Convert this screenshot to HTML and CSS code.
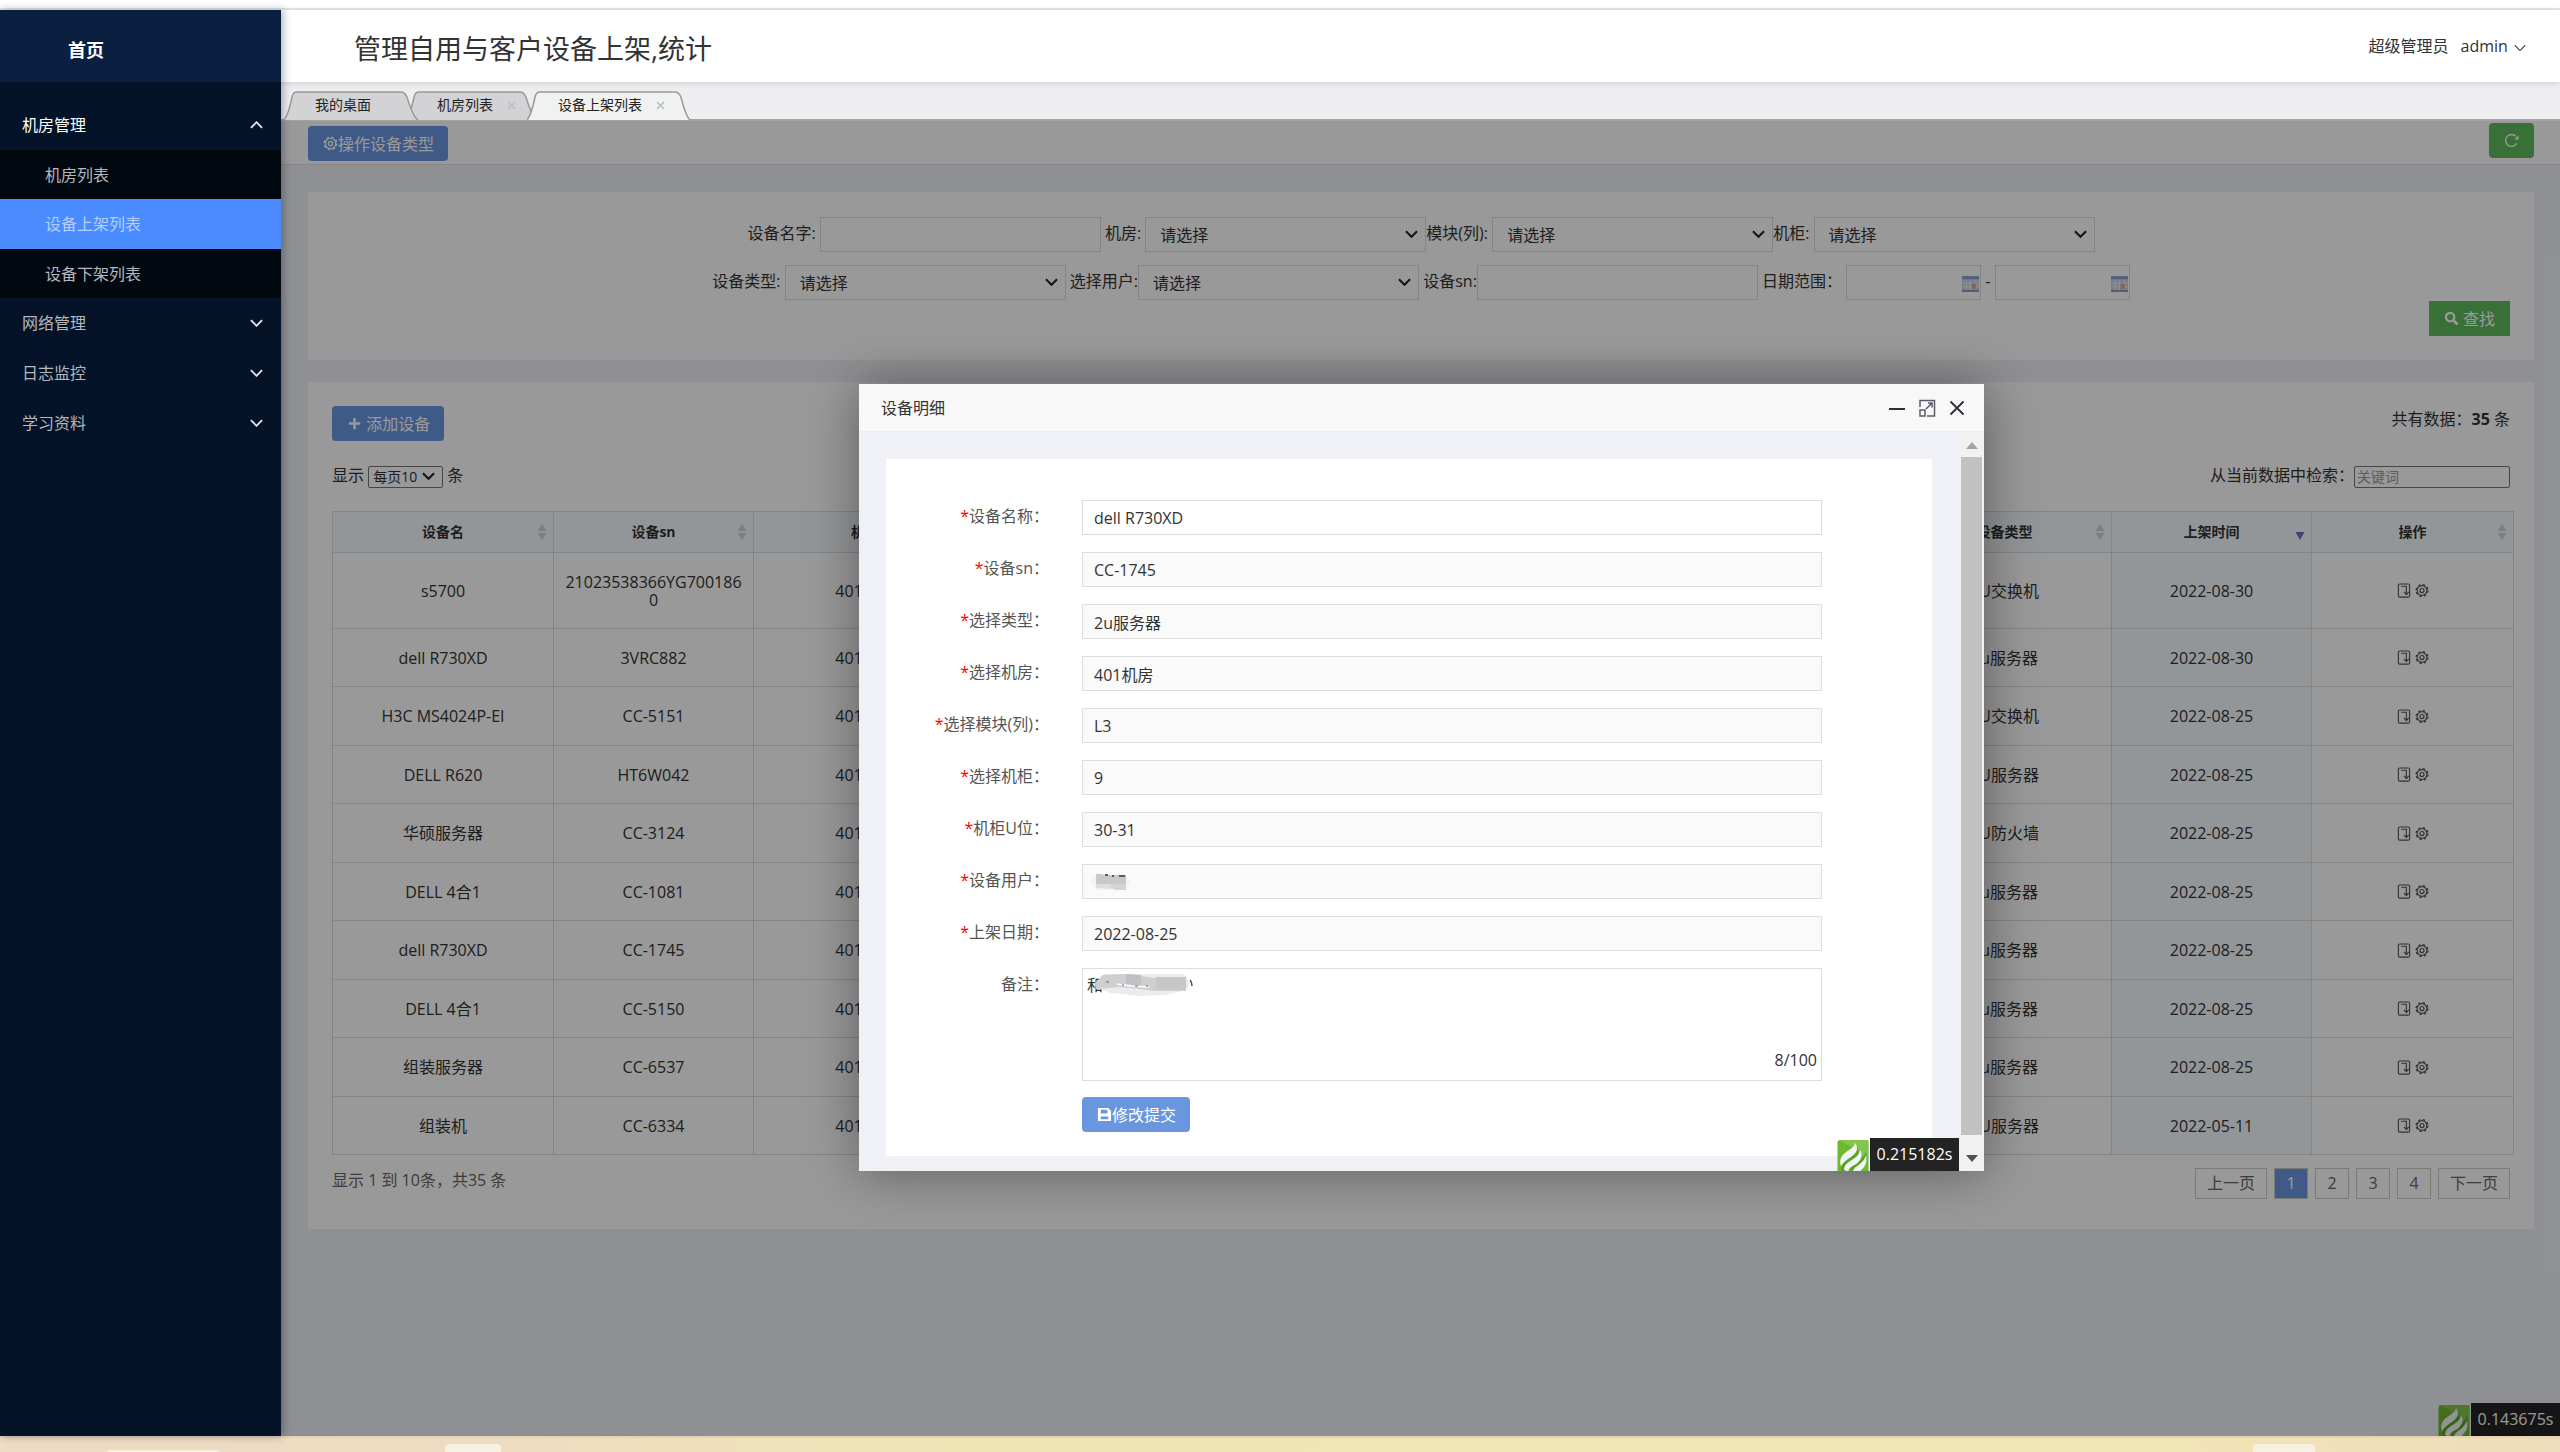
FILE: index.html
```html
<!DOCTYPE html>
<html lang="zh-CN">
<head>
<meta charset="utf-8">
<title>设备上架列表</title>
<link rel="stylesheet" href="styles.css">
</head>
<body>
<svg class="sprite" aria-hidden="true">
  <symbol id="chev" viewBox="0 0 14 8"><path d="M1 1l6 6 6-6" fill="none" stroke="currentColor" stroke-width="2"/></symbol>
  <symbol id="chev-up" viewBox="0 0 14 8"><path d="M1 7l6-6 6 6" fill="none" stroke="currentColor" stroke-width="2"/></symbol>
  <symbol id="gear" viewBox="0 0 16 16"><g fill="none" stroke="currentColor"><circle cx="8" cy="8" r="5.6" stroke-width="1.3"/><circle cx="8" cy="8" r="6.8" stroke-width="1.4" stroke-dasharray="2.8 2.54"/><circle cx="8" cy="8" r="2.3" stroke-width="1.4"/></g></symbol>
  <symbol id="down" viewBox="0 0 14 16"><g fill="none" stroke="currentColor" stroke-width="1.2"><rect x="1" y="1" width="12" height="14" rx="1.5"/><path d="M4 3.500h5.500v8M7 9.500l2.500 3 2.500-3"/></g></symbol>
  <symbol id="sort" viewBox="0 0 10 16"><path d="M5 0l4.500 7h-9zM5 16l4.500-7h-9z" fill="currentColor"/></symbol>
  <symbol id="logo" viewBox="0 0 34 34"><rect width="34" height="38" rx="3" fill="#6db82f"/><path d="M2 0h32v22L17 9z" fill="#8fcb5c" opacity=".7"/><g fill="#4f9420" opacity=".6" transform="translate(2 2)"><path d="M2 32c-1-9 4-13 10-17 5-3 7-6 7-11 4 6 2 11-3 15-5 4-9 6-8 14z"/><path d="M12 32c0-6 3-8 8-11 5-3 8-6 9-11 3 7 0 12-5 16-3 2-5 3-6 7z"/></g><g fill="#f2f5f7"><path d="M4 29c-3-8 1-13 7-17 5-3 8-5 8-9 4 5 3 10-2 14-5 4-10 6-13 12z"/><path d="M7 32c1-6 5-8 10-11 5-3 7-6 8-10 3 6 1 11-4 15-4 2-8 4-9 8h-3z"/><path d="M17 34c2-5 5-5 9-9 3-3 4-5 5-8 2 6 0 11-3 14l-4 4z"/></g></symbol>
  <symbol id="cal" viewBox="0 0 16 16"><rect x="0" y="1" width="16" height="15" rx="1" fill="#c9d3ea"/><path d="M0 1h16v3H0z" fill="#8f9fd0"/><path d="M0 14h16v2H0z" fill="#8d9cbb"/><path d="M1 8h14M1 11h14M4 5v9M8 5v9M12 5v9" stroke="#eef1fa"/><path d="M9 8h4v5H9z" fill="#e2a58b"/></symbol>
</svg>

<div class="window-edge"></div>
<div class="app">
  <nav class="sidebar">
    <a class="home" href="#">首页</a>
    <div class="menu">
      <a class="menu-item open" href="#">机房管理<svg class="chev"><use href="#chev-up"/></svg></a>
      <div class="submenu">
        <a href="#">机房列表</a>
        <a class="active" href="#">设备上架列表</a>
        <a href="#">设备下架列表</a>
      </div>
      <a class="menu-item" href="#">网络管理<svg class="chev"><use href="#chev"/></svg></a>
      <a class="menu-item" href="#">日志监控<svg class="chev"><use href="#chev"/></svg></a>
      <a class="menu-item" href="#">学习资料<svg class="chev"><use href="#chev"/></svg></a>
    </div>
  </nav>

  <div class="main">
    <header class="header">
      <h1>管理自用与客户设备上架,统计</h1>
      <div class="user"><span>超级管理员</span><a href="#">admin <svg class="caret" viewBox="0 0 14 8"><path d="M1 1l6 6 6-6" fill="none" stroke="currentColor" stroke-width="1.3"/></svg></a></div>
    </header>

    <div class="tabs">
      <div class="tab tab-first"><svg class="shape" viewBox="0 0 135 28" preserveAspectRatio="none"><path d="M0 28Q4 24 8 6Q9 1 13 1H117Q121 1 123 6Q129 25 134 28"/></svg><a href="#">我的桌面</a></div>
      <div class="tab tab-mid"><svg class="shape" viewBox="0 0 131 28" preserveAspectRatio="none"><path d="M0 28Q4 24 8 6Q9 1 13 1H114Q118 1 120 6Q126 25 131 28"/></svg><a href="#">机房列表</a><button class="tab-x" aria-label="关闭"><svg viewBox="0 0 9 9"><path d="M1 1l7 7M8 1L1 8"/></svg></button></div>
      <div class="tab tab-on"><svg class="shape" viewBox="0 0 163 28" preserveAspectRatio="none"><path d="M0 28Q4 24 8 6Q9 1 13 1H148Q152 1 154 6Q159 25 163 28"/></svg><a href="#">设备上架列表</a><button class="tab-x" aria-label="关闭"><svg viewBox="0 0 9 9"><path d="M1 1l7 7M8 1L1 8"/></svg></button></div>
    </div>

    <div class="frame">
      <div class="toolbar">
        <button class="btn btn-blue"><svg class="ico"><use href="#gear"/></svg>操作设备类型</button>
        <button class="btn btn-green refresh" aria-label="刷新"><svg viewBox="0 0 16 16" class="ico"><path d="M12.500 3.500A6.300 6.300 0 1 0 13.500 11" fill="none" stroke="currentColor" stroke-width="1.400"/><path d="M11 7h4.500V2.500z" fill="currentColor"/></svg></button>
      </div>

      <form class="card search">
        <div class="search-row"><label for="q-name">设备名字:</label> <input id="q-name" class="field" type="text"> <label for="q-room">机房:</label> <select id="q-room" class="field"><option>请选择</option></select><label for="q-mod">模块(列):</label> <select id="q-mod" class="field"><option>请选择</option></select><label for="q-cab">机柜:</label> <select id="q-cab" class="field"><option>请选择</option></select></div>
        <div class="search-row"><label for="q-type">设备类型:</label> <select id="q-type" class="field"><option>请选择</option></select> <label for="q-user">选择用户:</label><select id="q-user" class="field"><option>请选择</option></select> <label for="q-sn">设备sn:</label><input id="q-sn" class="field" type="text"> <label for="q-from">日期范围：</label> <span class="date"><input id="q-from" class="field" type="text"><svg><use href="#cal"/></svg></span> - <span class="date"><input class="field" type="text" aria-label="结束日期"><svg><use href="#cal"/></svg></span></div>
        <div class="search-end"><button type="button" class="btn btn-green square"><svg viewBox="0 0 16 16" class="ico"><circle cx="6.500" cy="6.500" r="4.500" fill="none" stroke="currentColor" stroke-width="2.400"/><path d="M10 10l4.500 4.500" stroke="currentColor" stroke-width="3"/></svg> 查找</button></div>
      </form>

      <section class="card list">
        <div class="list-top">
          <button class="btn btn-blue"><svg viewBox="0 0 16 16" class="ico"><path d="M8 2v12M2 8h12" stroke="currentColor" stroke-width="2.600"/></svg> 添加设备</button>
          <span class="total">共有数据：<b>35</b> 条</span>
        </div>
        <div class="list-filter">
          <label>显示 <select class="page-size"><option>每页10</option></select> 条</label>
          <label>从当前数据中检索：<input class="keyword" type="text" placeholder="关键词"></label>
        </div>
        <table class="grid">
          <colgroup><col class="c-name"><col class="c-sn"><col class="c-room"><col><col class="c-type"><col class="c-date"><col class="c-act"></colgroup>
          <thead><tr>
            <th>设备名<svg><use href="#sort"/></svg></th><th>设备sn<svg><use href="#sort"/></svg></th><th>机房<svg><use href="#sort"/></svg></th><th></th><th>设备类型<svg><use href="#sort"/></svg></th><th>上架时间<svg class="desc" viewBox="0 0 10 16"><path d="M5 16l4.500-8h-9z" fill="currentColor"/></svg></th><th>操作<svg><use href="#sort"/></svg></th>
          </tr></thead>
          <tbody>
            <tr><td>s5700</td><td>21023538366YG7001860</td><td>401机房</td><td></td><td>1U交换机</td><td class="sorted">2022-08-30</td><td><button aria-label="下架"><svg><use href="#down"/></svg></button><button aria-label="明细"><svg><use href="#gear"/></svg></button></td></tr>
            <tr><td>dell R730XD</td><td>3VRC882</td><td>401机房</td><td></td><td>2u服务器</td><td class="sorted">2022-08-30</td><td><button aria-label="下架"><svg><use href="#down"/></svg></button><button aria-label="明细"><svg><use href="#gear"/></svg></button></td></tr>
            <tr><td>H3C MS4024P-EI</td><td>CC-5151</td><td>401机房</td><td></td><td>1U交换机</td><td class="sorted">2022-08-25</td><td><button aria-label="下架"><svg><use href="#down"/></svg></button><button aria-label="明细"><svg><use href="#gear"/></svg></button></td></tr>
            <tr><td>DELL R620</td><td>HT6W042</td><td>401机房</td><td></td><td>1U服务器</td><td class="sorted">2022-08-25</td><td><button aria-label="下架"><svg><use href="#down"/></svg></button><button aria-label="明细"><svg><use href="#gear"/></svg></button></td></tr>
            <tr><td>华硕服务器</td><td>CC-3124</td><td>401机房</td><td></td><td>1U防火墙</td><td class="sorted">2022-08-25</td><td><button aria-label="下架"><svg><use href="#down"/></svg></button><button aria-label="明细"><svg><use href="#gear"/></svg></button></td></tr>
            <tr><td>DELL 4合1</td><td>CC-1081</td><td>401机房</td><td></td><td>2u服务器</td><td class="sorted">2022-08-25</td><td><button aria-label="下架"><svg><use href="#down"/></svg></button><button aria-label="明细"><svg><use href="#gear"/></svg></button></td></tr>
            <tr><td>dell R730XD</td><td>CC-1745</td><td>401机房</td><td></td><td>2u服务器</td><td class="sorted">2022-08-25</td><td><button aria-label="下架"><svg><use href="#down"/></svg></button><button aria-label="明细"><svg><use href="#gear"/></svg></button></td></tr>
            <tr><td>DELL 4合1</td><td>CC-5150</td><td>401机房</td><td></td><td>2u服务器</td><td class="sorted">2022-08-25</td><td><button aria-label="下架"><svg><use href="#down"/></svg></button><button aria-label="明细"><svg><use href="#gear"/></svg></button></td></tr>
            <tr><td>组装服务器</td><td>CC-6537</td><td>401机房</td><td></td><td>2u服务器</td><td class="sorted">2022-08-25</td><td><button aria-label="下架"><svg><use href="#down"/></svg></button><button aria-label="明细"><svg><use href="#gear"/></svg></button></td></tr>
            <tr><td>组装机</td><td>CC-6334</td><td>401机房</td><td></td><td>1U服务器</td><td class="sorted">2022-05-11</td><td><button aria-label="下架"><svg><use href="#down"/></svg></button><button aria-label="明细"><svg><use href="#gear"/></svg></button></td></tr>
          </tbody>
        </table>
        <div class="list-foot">
          <span>显示 1 到 10条，共35 条</span>
          <div class="pager"><a class="wide" href="#">上一页</a><a class="on" href="#">1</a><a href="#">2</a><a href="#">3</a><a href="#">4</a><a class="wide" href="#">下一页</a></div>
        </div>
      </section>
      <div class="trace trace-page"><svg><use href="#logo"/></svg><span>0.143675s</span></div>

      <div class="overlay">
        <div class="modal" role="dialog" aria-labelledby="dlg-title">
          <div class="modal-head">
            <span id="dlg-title">设备明细</span>
            <div class="modal-tools">
              <button aria-label="最小化"><svg viewBox="0 0 18 20"><path d="M1 11h16" stroke="#2d2c3b" stroke-width="2"/></svg></button>
              <button aria-label="最大化"><svg viewBox="0 0 18 20"><g fill="none" stroke="#5c5a68" stroke-width="1.500"><path d="M2 9V2.500h14.500v15.500H9"/><rect x="2" y="12" width="5" height="6"/><path d="M8 11l6-6M10 5h4v4.500"/></g></svg></button>
              <button aria-label="关闭"><svg viewBox="0 0 18 20"><path d="M2.500 3.500l13 13M15.500 3.500l-13 13" stroke="#2d2c3b" stroke-width="1.800"/></svg></button>
            </div>
          </div>
          <div class="modal-body">
            <form class="detail">
              <label for="d1"><i>*</i>设备名称：</label><input id="d1" type="text" value="dell R730XD">
              <label for="d2"><i>*</i>设备sn：</label><input id="d2" type="text" value="CC-1745" readonly>
              <label for="d3"><i>*</i>选择类型：</label><input id="d3" type="text" value="2u服务器" readonly>
              <label for="d4"><i>*</i>选择机房：</label><input id="d4" type="text" value="401机房" readonly>
              <label for="d5"><i>*</i>选择模块(列)：</label><input id="d5" type="text" value="L3" readonly>
              <label for="d6"><i>*</i>选择机柜：</label><input id="d6" type="text" value="9" readonly>
              <label for="d7"><i>*</i>机柜U位：</label><input id="d7" type="text" value="30-31" readonly>
              <label for="d8"><i>*</i>设备用户：</label>
              <div class="masked"><input id="d8" type="text" readonly><svg class="mask-user" viewBox="0 0 45 20"><path d="M2 8l6-5h30l5 8-6 7H8z" fill="#f3f3f3"/><path d="M8 2h6l2 1h22v9H8z" fill="#c8c8c8"/><path d="M8 12h15v5l-15-1z" fill="#dedede"/><path d="M23 12h15v6H28l-5-2z" fill="#d4d4d4"/><path d="M17 3h3M24 4h2M31 4h6" stroke="#333" stroke-width="1.500"/></svg></div>
              <label for="d9"><i>*</i>上架日期：</label><input id="d9" type="text" value="2022-08-25" readonly>
              <label for="d10">备注：</label>
              <div class="masked"><textarea id="d10">和</textarea><svg class="mask-note" viewBox="0 0 100 26"><path d="M3 12l8-9h80l6 9-4 7-20 5-25 1-30-3-14-5z" fill="#ececee"/><path d="M2 12l8-8 20-1 17 2 15 2h31v13H62l-15-2-20-2-24 2z" fill="#cfcfd0"/><path d="M33 3l15 1v11l-15-2z" fill="#bfc0c4"/><path d="M63 6h30v13H63z" fill="#c8c7c7"/><path d="M24 13l14 2 18 1" stroke="#fff" stroke-width="1.500" fill="none"/><path d="M13 11h3M29 14h2M42 15h3M53 15h2" stroke="#666" stroke-width="1"/><path d="M97 9q2 2 2 6" stroke="#446" stroke-width="1.500" fill="none"/></svg><span class="count">8/100</span></div>
              <button type="button" class="btn btn-blue submit"><svg viewBox="0 0 16 16" class="ico"><path d="M1 1h11l3 3v11H1z" fill="currentColor"/><path d="M4 3h7v4H4zM4 10h8v3H4z" fill="#6997df"/></svg>修改提交</button>
            </form>
            <div class="scroll"><svg viewBox="0 0 12 7"><path d="M0 7h12L6 0z" fill="#a3a3a3"/></svg><div class="thumb"></div><svg viewBox="0 0 12 7"><path d="M0 0h12L6 7z" fill="#505050"/></svg></div>
            <div class="trace trace-modal"><svg><use href="#logo"/></svg><span>0.215182s</span></div>
          </div>
        </div>
      </div>
    </div>
  </div>
</div>
<div class="taskbar"><i class="pin-a"></i><i class="pin-b"></i><i class="pin-c"></i></div>
</body>
</html>
```
FILE: styles.css
```css
* { box-sizing: border-box; }
body {
  margin: 0;
  min-height: 100vh;
  display: flex;
  flex-direction: column;
  font: 16px/24px "Open Sans", "Noto Sans CJK SC", sans-serif;
  color: #333;
  background: #fff;
}
a { color: inherit; text-decoration: none; }
button, input, select, textarea { font: inherit; color: inherit; border-radius: 0; margin: 0; }
button { border: 0; padding: 0; background: none; }
.sprite { position: absolute; width: 0; height: 0; }

.window-edge { height: 10px; border-bottom: 2px solid #e4e8ec; flex: none; }
.app { flex: 1; display: grid; grid-template-columns: 281px 1fr; }

/* sidebar */
.sidebar { background: #041328; color: #b4b8bf; z-index: 2; box-shadow: 2px 0 8px rgba(0, 21, 41, .35); }
.home { display: block; height: 72px; padding: 28px 68px 20px; background: #0b1f40; color: #fff; font-size: 18px; font-weight: bold; }
.menu { padding-top: 18px; }
.menu-item { display: flex; align-items: center; justify-content: space-between; height: 50px; padding: 0 18px 0 22px; }
.menu-item.open { color: #fff; }
.chev { width: 13px; height: 8px; color: #e6e8ea; }
.submenu { background: #01080f; }
.submenu a { display: flex; align-items: center; height: 49px; padding-left: 45px; }
.submenu .active { background: #4a8bff; color: #b3d0ff; height: 50px; }

/* header */
.main { display: flex; flex-direction: column; min-width: 0; }
.header { height: 72px; display: flex; align-items: center; justify-content: space-between; padding: 6px 34px 0 73px; background: #fff; box-shadow: 0 1px 6px rgba(0, 21, 41, .15); z-index: 1; }
.header h1 { margin: 0; font-size: 27px; font-weight: normal; line-height: 36px; }
.user { display: flex; gap: 12px; padding-bottom: 6px; }
.caret { width: 12px; height: 8px; margin-left: 2px; vertical-align: middle; }

/* tabs */
.tabs { height: 39px; display: flex; align-items: flex-end; padding-left: 3px; background: #eeeef0; border-bottom: 2px solid #a3a3a3; }
.tab { position: relative; display: flex; align-items: center; height: 30px; margin-bottom: -2px; padding: 0 10px 3px 31px; font-size: 14px; color: #222; }
.tab a, .tab-x { position: relative; }
.shape { position: absolute; left: 0; top: 0; width: 100%; height: 29px; fill: #d3d3d5; stroke: #999; stroke-width: 1.5; }
.tab-first { width: 135px; z-index: 2; }
.tab-mid { width: 131px; margin-left: -13px; z-index: 1; }
.tab-on { width: 163px; margin-left: -10px; z-index: 3; }
.tab-on .shape { fill: #f0f1f1; }
.tab-x { margin-left: 14px; height: 24px; }
.tab-x svg { width: 9px; height: 9px; stroke: #b9bdc2; stroke-width: 1.6; }

/* page inside the tab */
.frame { position: relative; flex: 1; background: #eff1f5; padding-bottom: 60px; }
.toolbar { display: flex; justify-content: space-between; align-items: flex-end; height: 44px; padding: 0 26px 3px 27px; background: #fff; border-bottom: 1px solid #e2e2e2; }
.btn { display: inline-flex; align-items: center; justify-content: center; height: 35px; padding: 0 14px 0 15px; border-radius: 4px; color: #fff; white-space: pre; }
.btn-blue { background: #6a96df; }
.btn-green { background: #5fbb5c; }
.square { border-radius: 0; padding: 0 15px; }
.refresh { width: 45px; padding: 0; align-self: flex-start; margin-top: 2px; }
.ico { width: 15px; height: 15px; flex: none; }
.card { background: #fff; margin: 27px 26px 0 27px; }

.search { padding: 24px 24px 24px; }
.search-row { height: 48px; text-align: center; white-space: nowrap; line-height: 34px; }
.search-row + .search-row { height: 37px; }
.field { width: 281px; height: 35px; border: 1px solid #ddd; background: #fff; vertical-align: middle; }
select.field { appearance: none; padding: 0 14px; background: #fff url("data:image/svg+xml,%3Csvg xmlns='http://www.w3.org/2000/svg' viewBox='0 0 14 9'%3E%3Cpath d='M1 1l6 6 6-6' fill='none' stroke='%23222' stroke-width='2.200'/%3E%3C/svg%3E") no-repeat right 7px center / 13px 9px; }
.date { position: relative; display: inline-block; vertical-align: middle; }
.date .field { width: 135px; display: block; }
.date svg { position: absolute; right: 2px; top: 10px; width: 17px; height: 17px; }
.search-end { display: flex; justify-content: flex-end; }

.list { margin-top: 22px; padding: 24px 20px 30px 24px; }
.list-top, .list-filter, .list-foot { display: flex; justify-content: space-between; padding-right: 4px; }
.total { line-height: 26px; }
.list-filter { height: 26px; line-height: 24px; margin: 22px 0; }
.page-size { appearance: none; width: 75px; height: 22px; padding: 0 4px; font-size: 14px; line-height: 20px; border: 1px solid #767676; border-radius: 2px; vertical-align: middle; background: #fff url("data:image/svg+xml,%3Csvg xmlns='http://www.w3.org/2000/svg' viewBox='0 0 14 9'%3E%3Cpath d='M1 1l6 6 6-6' fill='none' stroke='%23222' stroke-width='2.200'/%3E%3C/svg%3E") no-repeat right 7px center / 13px 9px; }
.keyword { width: 156px; height: 22px; padding: 0 2px; font-size: 14px; border: 1px solid #767676; border-radius: 2px; vertical-align: middle; }
.keyword::placeholder { color: #999; }

.grid { width: 100%; table-layout: fixed; border-collapse: collapse; text-align: center; }
.c-name { width: 221px; }
.c-sn { width: 200px; }
.c-room { width: 223px; }
.c-type { width: 214px; }
.c-date { width: 200px; }
.c-act { width: 202px; }
.grid th, .grid td { border: 1px solid #ddd; padding: 0 9px; line-height: 18px; word-break: break-all; }
.grid th { position: relative; height: 41px; font-size: 14px; background: #f5fafe; }
.grid th svg { position: absolute; right: 6px; top: 12px; width: 10px; height: 16px; color: #d2d2d2; }
.grid th .desc { color: #716dc4; }
.grid td { height: 58px; }
.grid tr:nth-child(odd) td { height: 59px; }
.grid tbody tr:first-child td { height: 76px; }
.grid .sorted { background: #f5fafe; }
.grid td button { width: 14px; height: 18px; margin: 0 2px; vertical-align: bottom; color: #555; }
.grid td button svg { display: block; width: 14px; height: 15px; }

.list-foot { padding-top: 13px; color: #666; }
.pager { display: flex; gap: 7px; }
.pager a { width: 34px; height: 31px; line-height: 29px; border: 1px solid #ccc; text-align: center; }
.pager .wide { width: 72px; }
.pager .on { background: #6a96df; color: #fff; }

/* page trace badges */
.trace { position: absolute; bottom: 0; display: flex; align-items: flex-end; }
.trace svg { width: 34px; height: 31px; }
.trace span { height: 33px; width: 89px; background: #232323; color: #fff; text-align: center; line-height: 32px; }
.trace-page { right: 0; }
.trace-modal { right: 25px; }

/* dialog */
.overlay { position: absolute; inset: 0; padding: 0 0 2px 2px; background: rgba(0, 0, 0, .4); display: flex; align-items: center; justify-content: center; overflow: hidden; z-index: 1; }
.modal { width: 1125px; background: #fff; box-shadow: 1px 1px 50px rgba(0, 0, 0, .4); }
.modal-head { display: flex; justify-content: space-between; align-items: center; height: 48px; padding: 0 18px 0 22px; background: #f8f8f8; border-bottom: 1px solid #eee; }
.modal-tools { display: flex; gap: 12px; }
.modal-tools svg { display: block; width: 18px; height: 20px; }
.modal-body { position: relative; display: flex; background: #f0f1f6; }
.detail { flex: 1; margin: 27px 27px 15px; padding: 41px 110px 24px 0; background: #fff; display: grid; grid-template-columns: 163px 1fr; gap: 17px 33px; }
.detail label { text-align: right; line-height: 32px; color: #555; }
.detail label i { color: #f00; font-style: normal; }
.detail input, .detail textarea { display: block; width: 100%; height: 35px; border: 1px solid #ddd; padding: 0 11px; background: #fff; }
.detail input[readonly] { background: #fafafa; }
.detail textarea { height: 113px; padding: 4px; resize: none; }
.masked { position: relative; }
.mask-user { position: absolute; left: 6px; top: 8px; width: 45px; height: 20px; }
.mask-note { position: absolute; left: 11px; top: 3px; width: 100px; height: 26px; }
.count { position: absolute; right: 5px; bottom: 9px; }
.submit { grid-column: 2; justify-self: start; margin-top: -1px; }
.scroll { width: 25px; background: #f1f1f1; padding: 10px 2px 9px; display: flex; flex-direction: column; align-items: center; }
.scroll svg { width: 12px; height: 7px; }
.thumb { flex: 1; align-self: stretch; margin: 8px 0 20px; background: #c1c1c1; }

/* desktop task bar edge */
.taskbar { flex: none; height: 16px; display: flex; align-items: flex-end; border-top: 2px solid #e6d3b6; overflow: hidden; background: linear-gradient(90deg, #efdcc4 0%, #eedcc2 20%, #f0e4b6 34%, #f2e6b4 82%, #efdcbc 100%); }
.taskbar i { background: #f8f0e0; border-radius: 4px 4px 0 0; }
.pin-a { width: 112px; height: 2px; margin-left: 107px; }
.pin-b { width: 56px; height: 8px; margin-left: 226px; }
.pin-c { width: 62px; height: 8px; margin-left: auto; margin-right: 245px; }
```
